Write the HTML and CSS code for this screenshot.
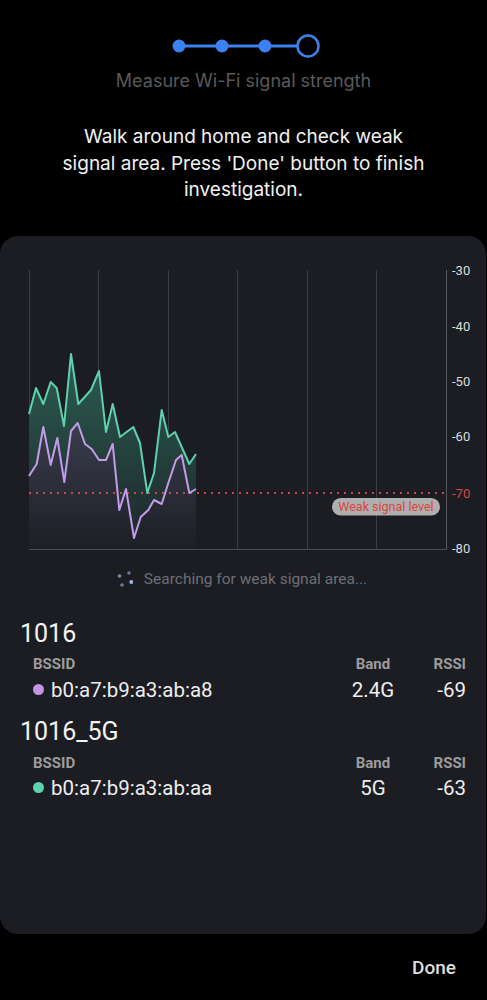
FILE: index.html
```html
<!DOCTYPE html>
<html lang="en">
<head>
<meta charset="utf-8">
<title>Measure Wi-Fi signal strength</title>
<link rel="stylesheet" href="styles.css">
</head>
<body>
<div class="page">
  <svg class="stepper" width="487" height="30" viewBox="0 0 487 30">
    <line x1="179" y1="15" x2="297" y2="15" stroke="#3b82f0" stroke-width="3"/>
    <circle cx="179" cy="15" r="6.5" fill="#3b82f0"/>
    <circle cx="222" cy="15" r="6.5" fill="#3b82f0"/>
    <circle cx="265" cy="15" r="6.5" fill="#3b82f0"/>
    <circle cx="308" cy="15" r="10.5" fill="#000" stroke="#3b82f0" stroke-width="2.5"/>
  </svg>
  <div class="subtitle">Measure Wi-Fi signal strength</div>
  <p class="instruction">Walk around home and check weak<br>signal area. Press 'Done' button to finish<br>investigation.</p>

  <section class="card">
    <svg class="chart" width="486" height="330" viewBox="0 0 486 330">
      <defs>
        <linearGradient id="gFill" x1="0" y1="118" x2="0" y2="313" gradientUnits="userSpaceOnUse">
          <stop offset="0" stop-color="#2c5e52"/>
          <stop offset="1" stop-color="#1d2528"/>
        </linearGradient>
        <linearGradient id="pFill" x1="0" y1="187" x2="0" y2="313" gradientUnits="userSpaceOnUse">
          <stop offset="0" stop-color="#3a3d4d"/>
          <stop offset="1" stop-color="#1d1f26"/>
        </linearGradient>
      </defs>
      <g stroke="#3a3d45" stroke-width="1">
        <line x1="29.5" y1="34" x2="29.5" y2="313"/>
        <line x1="98.5" y1="34" x2="98.5" y2="313"/>
        <line x1="168.5" y1="34" x2="168.5" y2="313"/>
        <line x1="237.5" y1="34" x2="237.5" y2="313"/>
        <line x1="307.5" y1="34" x2="307.5" y2="313"/>
        <line x1="376.5" y1="34" x2="376.5" y2="313"/>
      </g>
      <line x1="446.5" y1="34" x2="446.5" y2="313.5" stroke="#55585f" stroke-width="1"/>
      <line x1="29" y1="313.5" x2="447" y2="313.5" stroke="#4a4d55" stroke-width="1"/>

      <polygon fill="url(#gFill)" points="29,313 29,178 36,152 43.3,168 50.7,146 56.7,152 64,190 71,118 78.3,168 91,154 99,135 106,196 112.7,168 120,201 133.3,191 140,207 147.3,257 154,237 161.7,174 168.3,201 175,196 189.3,228 196,218 196,313"/>
      <polygon fill="url(#pFill)" points="29,313 29,240 36.7,228 43.3,191 50.7,229 57.3,202 64.3,246 71,195 77.7,187 85,208 91.7,213 99,224 106,224 112.7,208 119.3,274 126,253 134,302 140.7,281 148.3,274 154,264 161.7,268 168.3,247 176,224 181.7,219 189.3,257 196,253 196,313"/>

      <line x1="29" y1="257" x2="446" y2="257" stroke="#c94848" stroke-width="2" stroke-dasharray="2 5"/>

      <polyline fill="none" stroke="#5ed1ae" stroke-width="2" stroke-linejoin="round" points="29,178 36,152 43.3,168 50.7,146 56.7,152 64,190 71,118 78.3,168 91,154 99,135 106,196 112.7,168 120,201 133.3,191 140,207 147.3,257 154,237 161.7,174 168.3,201 175,196 189.3,228 196,218"/>
      <polyline fill="none" stroke="#c39ce9" stroke-width="2" stroke-linejoin="round" points="29,240 36.7,228 43.3,191 50.7,229 57.3,202 64.3,246 71,195 77.7,187 85,208 91.7,213 99,224 106,224 112.7,208 119.3,274 126,253 134,302 140.7,281 148.3,274 154,264 161.7,268 168.3,247 176,224 181.7,219 189.3,257 196,253"/>

      <rect x="332" y="262" width="108" height="17.5" rx="8.75" fill="#c4c4c4" fill-opacity="0.88"/>
      <text class="pill-text" x="386" y="275">Weak signal level</text>

      <g class="axis">
        <text x="452" y="38.5">-30</text>
        <text x="452" y="94.5">-40</text>
        <text x="452" y="150">-50</text>
        <text x="452" y="205">-60</text>
        <text x="452" y="261.5" class="axis-red">-70</text>
        <text x="452" y="317">-80</text>
      </g>
    </svg>

    <div class="searching">
      <svg class="spinner" width="16" height="16" viewBox="0 0 16 16">
        <circle cx="2.5" cy="5" r="1.8" fill="#7d8bb0"/>
        <circle cx="12" cy="2" r="1.8" fill="#6a7697"/>
        <circle cx="5" cy="14" r="1.8" fill="#6d7ba3"/>
        <circle cx="14.3" cy="11" r="2" fill="#9fb4ea"/>
      </svg>
      <span>Searching for weak signal area...</span>
    </div>

    <div class="network">
      <div class="ssid">1016</div>
      <div class="ap-grid">
        <div class="hdr">BSSID</div>
        <div class="hdr band">Band</div>
        <div class="hdr rssi">RSSI</div>
        <div class="val bssid"><span class="dot dot-purple"></span>b0:a7:b9:a3:ab:a8</div>
        <div class="val band">2.4G</div>
        <div class="val rssi">-69</div>
      </div>
    </div>

    <div class="network second">
      <div class="ssid">1016_5G</div>
      <div class="ap-grid">
        <div class="hdr">BSSID</div>
        <div class="hdr band">Band</div>
        <div class="hdr rssi">RSSI</div>
        <div class="val bssid"><span class="dot dot-green"></span>b0:a7:b9:a3:ab:aa</div>
        <div class="val band">5G</div>
        <div class="val rssi">-63</div>
      </div>
    </div>
  </section>

  <div class="footer">
    <span class="done">Done</span>
  </div>
</div>
</body>
</html>
```

FILE: styles.css
```css
* { box-sizing: border-box; }

html, body {
  margin: 0;
  padding: 0;
  background: #000;
}

body {
  font-family: Roboto, "Noto Sans", "Liberation Sans", sans-serif;
  color: #eeeeee;
  width: 487px;
  height: 1000px;
  overflow: hidden;
}

.page {
  display: flex;
  flex-direction: column;
}

.stepper {
  display: block;
  margin-top: 31px;
}

.subtitle {
  margin-top: 8px;
  text-align: center;
  font-family: Inter, Roboto, sans-serif;
  font-size: 18px;
  line-height: 24px;
  color: #5a5a5a;
}

.instruction {
  margin: 31px 0 0;
  text-align: center;
  font-family: Inter, Roboto, sans-serif;
  font-size: 19px;
  line-height: 26.5px;
  color: #f2f2f2;
}

.card {
  margin: 32px 1px 0 0;
  height: 698px;
  background: #1b1d23;
  border-radius: 18px;
  display: flex;
  flex-direction: column;
}

.chart {
  display: block;
}

.chart .axis text {
  font-family: Roboto, "Liberation Sans", sans-serif;
  font-size: 13px;
  fill: #dcdcdc;
}

.chart .axis .axis-red {
  fill: #d24a44;
}

.pill-text {
  font-family: Roboto, "Liberation Sans", sans-serif;
  font-size: 12.5px;
  fill: #d9463f;
  text-anchor: middle;
}

.searching {
  margin-top: 3px;
  display: flex;
  justify-content: center;
  align-items: center;
  gap: 11px;
  font-size: 15.5px;
  line-height: 20px;
  color: #6c6f76;
  padding-right: 2px;
}

.spinner {
  display: block;
}

.network {
  margin-top: 30px;
  padding: 0 20px 0 20px;
}

.network.second {
  margin-top: 14px;
}

.ssid {
  font-size: 25px;
  line-height: 30px;
  color: #f4f4f4;
}

.ap-grid {
  margin-top: 6px;
  display: grid;
  grid-template-columns: 1fr 44px 71px;
  row-gap: 4px;
  padding-left: 13px;
}

.second .ap-grid {
  margin-top: 7px;
  row-gap: 3px;
}

.hdr {
  font-size: 15px;
  line-height: 18px;
  font-weight: 700;
  color: #9c9c9c;
}

.val {
  font-size: 20.5px;
  line-height: 26px;
  color: #eeeeee;
}

.band {
  text-align: center;
}

.rssi {
  text-align: right;
}

.bssid {
  display: flex;
  align-items: center;
  gap: 7px;
}

.dot {
  width: 11px;
  height: 11px;
  border-radius: 50%;
  flex: none;
}

.dot-purple { background: #c293e6; }
.dot-green { background: #5ed1ae; }

.footer {
  display: flex;
  justify-content: flex-end;
  padding: 22px 31px 0 0;
}

.done {
  font-size: 19px;
  line-height: 24px;
  font-weight: 500;
  color: #dedede;
}
```
